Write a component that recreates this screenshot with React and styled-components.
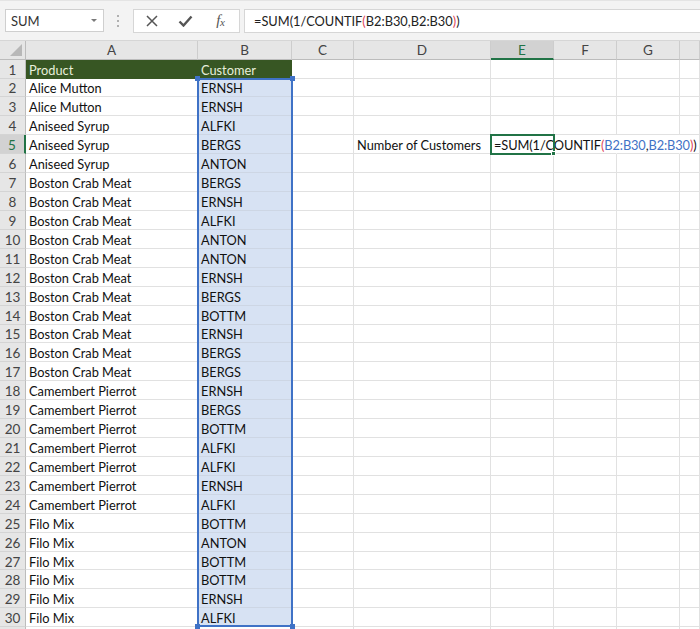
import React from "react";
import styled, { createGlobalStyle, css } from "styled-components";

const Global = createGlobalStyle`
  html, body { margin: 0; padding: 0; background: #fff; }
  body { width: 700px; height: 629px; overflow: hidden; font-family: Lato, "Liberation Sans", sans-serif; }
`;

const GREEN = "#217346";
const BLUE = "#3f72c6";

const Window = styled.div`
  width: 700px;
  height: 629px;
  overflow: hidden;
  display: flex;
  flex-direction: column;
`;

const Toolbar = styled.div`
  flex: none;
  display: flex;
  align-items: center;
  padding-left: 5px;
  background: #f3f3f3;
  border-top: 1px solid #e4e4e4;
  border-bottom: 1px solid #d6d6d6;
  box-sizing: border-box;
  height: 41px;
`;

const NameBox = styled.div`
  width: 99px;
  height: 23px;
  box-sizing: border-box;
  background: #fff;
  border: 1px solid #cfcfcf;
  display: flex;
  align-items: center;
  justify-content: space-between;
  padding: 0 6px 0 5px;
  font-size: 13px;
  color: #333;
`;

const Caret = styled.span`
  width: 0;
  height: 0;
  border-left: 3px solid transparent;
  border-right: 3px solid transparent;
  border-top: 3px solid #7a7a7a;
`;

const Grip = styled.div`
  width: 2px;
  margin: 0 14px 0 13px;
  display: flex;
  flex-direction: column;
  gap: 3px;
  span {
    width: 2px;
    height: 2px;
    background: #b0b0b0;
  }
`;

const FxButtons = styled.div`
  width: 107px;
  height: 24px;
  box-sizing: border-box;
  background: #fff;
  border: 1px solid #d6d6d6;
  display: flex;
  align-items: center;
  padding-left: 1px;
`;

const IconSlot = styled.div`
  width: ${(p) => p.$w}px;
  display: flex;
  justify-content: center;
  align-items: center;
  color: #555;
`;

const FxText = styled.span`
  font-family: "Liberation Serif", "DejaVu Serif", serif;
  font-style: italic;
  font-size: 15px;
  color: #555;
  letter-spacing: -0.5px;
  sub {
    font-size: 11px;
    vertical-align: -1px;
  }
`;

const FormulaInput = styled.div`
  flex: 1;
  margin-left: 4px;
  height: 24px;
  box-sizing: border-box;
  background: #fff;
  border: 1px solid #d6d6d6;
  border-right: none;
  display: flex;
  align-items: center;
  padding-left: 9px;
  font-size: 12.8px;
  color: #222;
  white-space: nowrap;
`;

const Paren = styled.span`
  color: #e0455a;
`;

const Ref = styled.span`
  color: ${BLUE};
`;

const SheetWrap = styled.div`
  position: relative;
  flex: 1;
`;

const Grid = styled.div`
  display: grid;
  grid-template-columns: 26px 172px 94px 62px 137px 63px 63px 63px 1fr;
  grid-template-rows: 18.6px repeat(31, 18.93px);
  font-size: 12.8px;
`;

const HeaderCell = styled.div`
  box-sizing: border-box;
  background: ${(p) => (p.$active ? "#d2d2d2" : "#e6e6e6")};
  color: ${(p) => (p.$active ? GREEN : "#444")};
  border-right: 1px solid #cdcdcd;
  border-bottom: ${(p) => (p.$active ? `2px solid ${GREEN}` : "1px solid #bcbcbc")};
  display: flex;
  align-items: center;
  justify-content: center;
  font-size: 13.5px;
  padding-top: 1px;
`;

const Corner = styled.div`
  box-sizing: border-box;
  background: #e6e6e6;
  border-right: 1px solid #bcbcbc;
  border-bottom: 1px solid #bcbcbc;
  position: relative;
  &::after {
    content: "";
    position: absolute;
    right: 3px;
    bottom: 3px;
    width: 0;
    height: 0;
    border-left: 12px solid transparent;
    border-bottom: 12px solid #b8b8b8;
  }
`;

const RowHead = styled.div`
  box-sizing: border-box;
  background: ${(p) => (p.$active ? "#d2d2d2" : "#e6e6e6")};
  color: ${(p) => (p.$active ? GREEN : "#444")};
  border-bottom: 1px solid #d4d4d4;
  border-right: ${(p) => (p.$active ? `2px solid ${GREEN}` : "1px solid #bcbcbc")};
  display: flex;
  align-items: center;
  justify-content: center;
  font-size: 13.5px;
  padding-top: 2px;
`;

const Cell = styled.div`
  box-sizing: border-box;
  border-right: 1px solid #e1e1e1;
  border-bottom: 1px solid #e1e1e1;
  padding: 2px 3px 0;
  display: flex;
  align-items: center;
  white-space: nowrap;
  color: #111;
  min-width: 0;
  overflow: visible;
  position: relative;
  ${(p) =>
    p.$head &&
    css`
      background: #375623;
      color: #e7eedb;
      border-color: #375623;
    `}
  ${(p) =>
    p.$sel &&
    css`
      background: #d7e2f3;
      border-bottom-color: #cdd6e4;
    `}
  ${(p) =>
    p.$spill &&
    css`
      border-right-color: transparent;
    `}
  ${(p) =>
    p.$active &&
    css`
      letter-spacing: -0.1px;
      outline: 2px solid ${GREEN};
      outline-offset: -1px;
      z-index: 2;
      &::after {
        content: "";
        position: absolute;
        right: -3px;
        bottom: -3px;
        width: 5px;
        height: 5px;
        background: ${GREEN};
        border: 1px solid #fff;
        box-sizing: border-box;
      }
    `}
`;

const SelectionBox = styled.div`
  position: absolute;
  box-sizing: border-box;
  border: 2px solid ${BLUE};
  pointer-events: none;
  z-index: 3;
`;

const Handle = styled.span`
  position: absolute;
  width: 5px;
  height: 5px;
  background: ${BLUE};
  ${(p) => (p.$top ? "top: -4px;" : "bottom: -4px;")}
  ${(p) => (p.$left ? "left: -4px;" : "right: -4px;")}
`;

const data = [
  ["Alice Mutton", "ERNSH"],
  ["Alice Mutton", "ERNSH"],
  ["Aniseed Syrup", "ALFKI"],
  ["Aniseed Syrup", "BERGS"],
  ["Aniseed Syrup", "ANTON"],
  ["Boston Crab Meat", "BERGS"],
  ["Boston Crab Meat", "ERNSH"],
  ["Boston Crab Meat", "ALFKI"],
  ["Boston Crab Meat", "ANTON"],
  ["Boston Crab Meat", "ANTON"],
  ["Boston Crab Meat", "ERNSH"],
  ["Boston Crab Meat", "BERGS"],
  ["Boston Crab Meat", "BOTTM"],
  ["Boston Crab Meat", "ERNSH"],
  ["Boston Crab Meat", "BERGS"],
  ["Boston Crab Meat", "BERGS"],
  ["Camembert Pierrot", "ERNSH"],
  ["Camembert Pierrot", "BERGS"],
  ["Camembert Pierrot", "BOTTM"],
  ["Camembert Pierrot", "ALFKI"],
  ["Camembert Pierrot", "ALFKI"],
  ["Camembert Pierrot", "ERNSH"],
  ["Camembert Pierrot", "ALFKI"],
  ["Filo Mix", "BOTTM"],
  ["Filo Mix", "ANTON"],
  ["Filo Mix", "BOTTM"],
  ["Filo Mix", "BOTTM"],
  ["Filo Mix", "ERNSH"],
  ["Filo Mix", "ALFKI"],
];

const cols = ["A", "B", "C", "D", "E", "F", "G", ""];
const HEADER_H = 18.6;
const ROW_H = 18.93;

function CellFormula() {
  return (
    <>
      =SUM(1/COUNTIF<Paren>(</Paren>
      <Ref>B2:B30</Ref>,<Ref>B2:B30</Ref>
      <Paren>)</Paren>)
    </>
  );
}

export default function App() {
  const rows = [];
  for (let r = 1; r <= 31; r++) {
    const cells = [];
    cells.push(
      <RowHead key="h" $active={r === 5}>
        {r <= 30 ? r : null}
      </RowHead>
    );
    for (let c = 0; c < 8; c++) {
      let content = null;
      const props = {};
      if (r === 1 && c === 0) {
        content = "Product";
        props.$head = true;
      } else if (r === 1 && c === 1) {
        content = "Customer";
        props.$head = true;
      } else if (r >= 2 && r <= 30 && c === 0) {
        content = data[r - 2][0];
      } else if (r >= 2 && r <= 30 && c === 1) {
        content = data[r - 2][1];
        props.$sel = true;
      } else if (r === 5 && c === 3) {
        content = "Number of Customers";
      } else if (r === 5 && c === 4) {
        content = <CellFormula />;
        props.$active = true;
      } else if (r === 5 && (c === 5 || c === 6)) {
        props.$spill = true;
      }
      cells.push(
        <Cell key={c} {...props}>
          {content}
        </Cell>
      );
    }
    rows.push(<React.Fragment key={r}>{cells}</React.Fragment>);
  }

  return (
    <Window>
      <Global />
      <Toolbar>
        <NameBox>
          <span>SUM</span>
          <Caret />
        </NameBox>
        <Grip>
          <span />
          <span />
          <span />
        </Grip>
        <FxButtons>
          <IconSlot $w={34}>
            <svg width="12" height="12" viewBox="0 0 12 12">
              <path d="M1 1 L11 11 M11 1 L1 11" stroke="#555" strokeWidth="1.5" fill="none" />
            </svg>
          </IconSlot>
          <IconSlot $w={34}>
            <svg width="15" height="12" viewBox="0 0 15 12">
              <path d="M1.5 6.5 L5.5 10.5 L13.5 1.5" stroke="#555" strokeWidth="2.4" fill="none" />
            </svg>
          </IconSlot>
          <IconSlot $w={38}>
            <FxText>
              f<sub>x</sub>
            </FxText>
          </IconSlot>
        </FxButtons>
        <FormulaInput>
          =SUM(1/COUNTIF<Paren>(</Paren>B2:B30,B2:B30<Paren>)</Paren>)
        </FormulaInput>
      </Toolbar>
      <SheetWrap>
        <Grid>
          <Corner />
          {cols.map((c, i) => (
            <HeaderCell key={i} $active={c === "E"}>
              {c}
            </HeaderCell>
          ))}
          {rows}
        </Grid>
        <SelectionBox
          style={{
            left: 197,
            top: HEADER_H + ROW_H - 1,
            width: 96,
            height: ROW_H * 29 + 1,
          }}
        >
          <Handle $top $left />
          <Handle $top />
          <Handle $left />
          <Handle />
        </SelectionBox>
      </SheetWrap>
    </Window>
  );
}
